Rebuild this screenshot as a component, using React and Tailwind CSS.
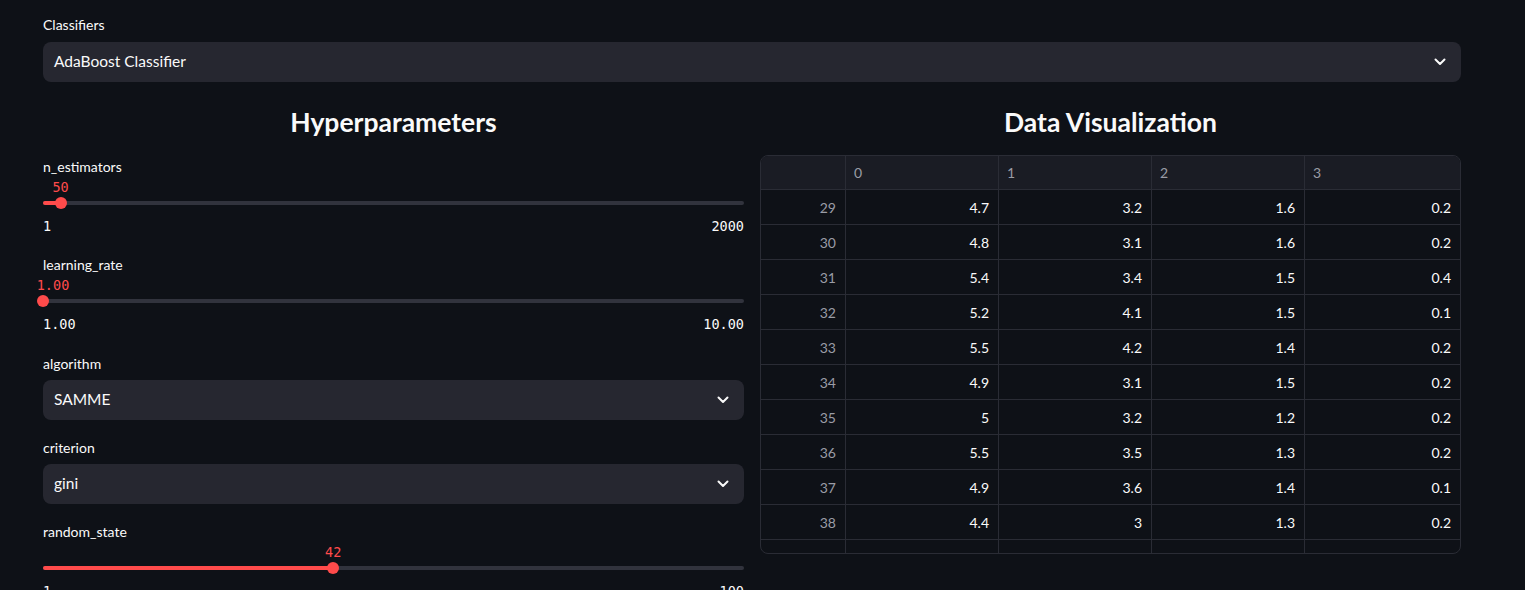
import React from "react"

const rows = [
  [29, "4.7", "3.2", "1.6", "0.2"],
  [30, "4.8", "3.1", "1.6", "0.2"],
  [31, "5.4", "3.4", "1.5", "0.4"],
  [32, "5.2", "4.1", "1.5", "0.1"],
  [33, "5.5", "4.2", "1.4", "0.2"],
  [34, "4.9", "3.1", "1.5", "0.2"],
  [35, "5", "3.2", "1.2", "0.2"],
  [36, "5.5", "3.5", "1.3", "0.2"],
  [37, "4.9", "3.6", "1.4", "0.1"],
  [38, "4.4", "3", "1.3", "0.2"],
  [39, "5.1", "3.4", "1.5", "0.2"],
]

function Chevron() {
  return (
    <svg width="12" height="8" viewBox="0 0 12 8" fill="none" className="shrink-0">
      <path d="M1.5 1.5 L6 6 L10.5 1.5" stroke="#fafafa" strokeWidth="2" strokeLinecap="round" strokeLinejoin="round" />
    </svg>
  )
}

function Select({ value }) {
  return (
    <div className="flex h-10 items-center justify-between rounded-lg bg-[#262730] pl-[11px] pr-[15px] text-[15.5px] text-[#fafafa]">
      <span>{value}</span>
      <Chevron />
    </div>
  )
}

function Label({ children }) {
  return <div className="h-5 text-[14px] leading-5 text-[#fafafa]">{children}</div>
}

function Slider({ label, value, min, max, pct, shift = 0 }) {
  return (
    <div>
      <Label>{label}</Label>
      <div className="relative h-[32px]">
        <span
          className="absolute top-0 -translate-x-1/2 font-['DejaVu_Sans_Mono',monospace] text-[13.5px] leading-5 text-[#ff4b4b]"
          style={{ left: `calc(${pct}% + ${shift}px)` }}
        >
          {value}
        </span>
        <div className="absolute left-0 right-0 top-[24px] h-1 rounded-full bg-[#31333d]">
          <div className="h-1 rounded-full bg-[#ff4b4b]" style={{ width: `${pct}%` }} />
        </div>
        <div
          className="absolute top-[20px] h-3 w-3 -translate-x-1/2 rounded-full bg-[#ff4b4b]"
          style={{ left: `${pct}%` }}
        />
      </div>
      <div className="mt-[7px] flex justify-between font-['DejaVu_Sans_Mono',monospace] text-[13.5px] leading-5 text-[#fafafa]">
        <span>{min}</span>
        <span>{max}</span>
      </div>
    </div>
  )
}

export default function App() {
  return (
    <div className="min-h-screen bg-[#0e1117] font-['Lato',sans-serif] text-[#fafafa]">
      <div className="ml-[43px] w-[1418px] pt-[15px]">
        <Label>Classifiers</Label>
        <div className="mt-[7px]">
          <Select value="AdaBoost Classifier" />
        </div>

        <div className="mt-6 grid grid-cols-2 gap-4">
          <div>
            <h3 className="h-[34px] text-center text-[26.5px] font-bold leading-[32px]">Hyperparameters</h3>
            <div className="mt-[17px]">
              <Slider label="n_estimators" value="50" min="1" max="2000" pct={2.5} />
            </div>
            <div className="mt-[19px]">
              <Slider label="learning_rate" value="1.00" min="1.00" max="10.00" pct={0} shift={10} />
            </div>
            <div className="mt-5">
              <Label>algorithm</Label>
              <div className="mt-[6px]">
                <Select value="SAMME" />
              </div>
            </div>
            <div className="mt-[18px]">
              <Label>criterion</Label>
              <div className="mt-[6px]">
                <Select value="gini" />
              </div>
            </div>
            <div className="mt-[18px]">
              <Slider label="random_state" value="42" min="1" max="100" pct={41.4} />
            </div>
          </div>

          <div>
            <h3 className="h-[34px] text-center text-[26.5px] font-bold leading-[32px]">Data Visualization</h3>
            <div className="mt-[15px] h-[399px] overflow-hidden rounded-lg border border-[#2a2c35] text-[14px]">
              <div className="grid h-[34px] grid-cols-[85px_153px_153px_153px_1fr] bg-[#1a1c24] text-[#9a9ca6]">
                <div className="border-b border-r border-[#2a2c35]" />
                {["0", "1", "2", "3"].map((h, i) => (
                  <div
                    key={h}
                    className={`flex items-center border-b border-[#2a2c35] pl-2 ${i < 3 ? "border-r" : ""}`}
                  >
                    {h}
                  </div>
                ))}
              </div>
              {rows.map((r) => (
                <div key={r[0]} className="grid h-[35px] grid-cols-[85px_153px_153px_153px_1fr]">
                  <div className="flex items-center justify-end border-b border-r border-[#2a2c35] pr-[9px] text-[#9a9ca6]">
                    {r[0]}
                  </div>
                  {r.slice(1).map((c, i) => (
                    <div
                      key={i}
                      className={`flex items-center justify-end border-b border-[#2a2c35] pr-[9px] ${i < 3 ? "border-r" : ""}`}
                    >
                      {c}
                    </div>
                  ))}
                </div>
              ))}
            </div>
          </div>
        </div>
      </div>
    </div>
  )
}
